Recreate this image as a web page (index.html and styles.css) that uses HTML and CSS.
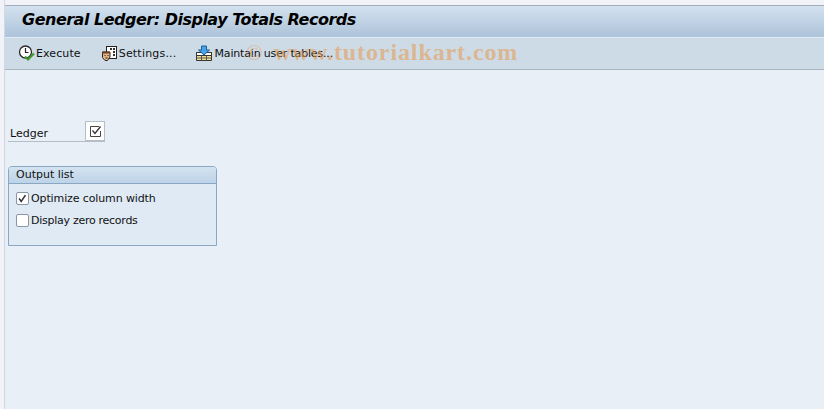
FILE: index.html
```html
<!DOCTYPE html>
<html lang="en">
<head>
<meta charset="utf-8">
<title>General Ledger: Display Totals Records</title>
<link rel="stylesheet" href="styles.css">
</head>
<body>
<div class="window">
  <header class="titlebar"><h1 class="title">General Ledger: Display Totals Records</h1></header>
  <nav class="toolbar">
    <span class="tool tool-execute">
      <svg class="icon" width="18" height="17" viewBox="0 0 18 17">
        <circle cx="7.500" cy="7" r="6" fill="#fff" stroke="#2b2b2b" stroke-width="1.300"/>
        <path d="M7.500 3v4.500h3" fill="none" stroke="#222" stroke-width="1.200"/>
        <path d="M7 11.500l3 3 6-6" fill="none" stroke="#3f9a2c" stroke-width="2.200"/>
      </svg>Execute
    </span>
    <span class="tool tool-settings">
      <svg class="icon" width="17" height="17" viewBox="0 0 17 17">
        <rect x="5.500" y="1.500" width="10" height="12" fill="#fff" stroke="#222"/>
        <path d="M9 3h2v2H9zM12 3h2v2h-2zM12 6h2v2h-2zM12 9h2v2h-2z" fill="#333"/>
        <path d="M1.500 7h7.500v5l-2.500 3.500h-2.500l-2.500-3z" fill="#e2b48a" stroke="#3a2414"/>
        <path d="M1.500 6.500h7.500v2h-7.500z" fill="#6e4322"/>
        <path d="M3.500 10.500h1M6.500 10.500h1M4.500 13h2" stroke="#222"/>
      </svg>Settings...
    </span>
    <span class="tool tool-maintain">
      <svg class="icon" width="18" height="17" viewBox="0 0 18 17">
        <path d="M1.500 7.500h15v8h-15z" fill="#f6df92" stroke="#333"/>
        <path d="M1.500 7.500h15v3h-15z" fill="#fff" stroke="#333"/>
        <path d="M6.500 10.500v5M11.500 10.500v5M1.500 13h15" stroke="#555"/>
        <path d="M6.500 1h5v4h3l-5.500 5-5.500-5h3z" fill="#4aa3e8" stroke="#1d5f9a"/>
      </svg>Maintain user tables...
    </span>
  </nav>
  <main class="content">
    <div class="field-row">
      <span class="field-label">Ledger</span>
      <span class="check-cell">
        <svg width="13" height="13" viewBox="0 0 13 13">
          <path d="M10 1.500H1.500v10h10V6" fill="none" stroke="#444"/>
          <path d="M3.500 5.500l2.500 3 5.500-7" fill="none" stroke="#333" stroke-width="1.300"/>
        </svg>
      </span>
    </div>
    <section class="group">
      <h2 class="group-title">Output list</h2>
      <div class="group-body">
        <label class="option">
          <span class="box"><svg width="13" height="13" viewBox="0 0 13 13"><path d="M2.500 6.500l2.500 3.500 5-7.500" fill="none" stroke="#333" stroke-width="1.800"/></svg></span>Optimize column width
        </label>
        <label class="option option-last"><span class="box"></span>Display zero records</label>
      </div>
    </section>
  </main>
  <div class="watermark"><span class="copy">©</span>www.tutorialkart.com</div>
</div>
</body>
</html>
```

FILE: styles.css
```css
* { box-sizing: border-box; }
html, body { margin: 0; height: 100%; }
body {
  background: #f1f3f8;
  font-family: "DejaVu Sans", sans-serif;
  overflow: hidden;
}
.window {
  position: relative;
  height: 409px;
  margin-left: 4px;
  padding-top: 5px;
  border-left: 1px solid #d3d7e3;
  background: linear-gradient(#f1f3f8 5px, #e8eff7 5px);
}
.titlebar {
  height: 32px;
  padding: 4px 0 0 17px;
  border-top: 1px solid #a4adbd;
  background: linear-gradient(#d3e1ee, #adc3da);
}
.title {
  margin: 0;
  font: italic bold 16px/20px "DejaVu Sans", sans-serif;
  letter-spacing: -0.5px;
  color: #000;
}
.toolbar {
  display: flex;
  align-items: center;
  height: 33px;
  padding-left: 13px;
  border-top: 1px solid #e4edf5;
  border-bottom: 1px solid #a9b5c3;
  background: #cddbe7;
}
.tool {
  display: flex;
  align-items: center;
  font-size: 11px;
  color: #111;
  white-space: nowrap;
}
.tool-execute { letter-spacing: 0.1px; }
.tool-settings { margin-left: 20px; gap: 1px; letter-spacing: 0.2px; }
.tool-maintain { margin-left: 18px; gap: 2px; letter-spacing: -0.17px; }
.content { padding: 52px 0 0 3px; }
.field-row {
  display: flex;
  align-items: flex-end;
  width: 97px;
  height: 20px;
  border-bottom: 1px solid #b5bdc8;
  font-size: 11px;
  color: #111;
}
.field-label { width: 77px; padding: 0 0 0 2px; line-height: 15px; }
.check-cell {
  display: flex;
  align-items: center;
  justify-content: center;
  width: 20px;
  height: 20px;
  background: #fff;
  border: 1px solid #b5bdc8;
}
.group {
  width: 209px;
  height: 80px;
  margin-top: 24px;
  border: 1px solid #8aa7c4;
  border-radius: 4px 4px 0 0;
  background: #dfeaf4;
}
.group-title {
  margin: 0;
  height: 17px;
  padding-left: 7px;
  border-bottom: 1px solid #8aa7c4;
  background: linear-gradient(#d4e3f0, #bdd3e7);
  font: 400 11px/16px "DejaVu Sans", sans-serif;
  color: #111;
  border-radius: 3px 3px 0 0;
}
.group-body { padding: 3px 0 0 7px; }
.option {
  display: flex;
  align-items: center;
  height: 22px;
  font-size: 11px;
  letter-spacing: -0.12px;
  color: #111;
}
.option-last { letter-spacing: -0.27px; }
.box {
  display: flex;
  align-items: center;
  justify-content: center;
  width: 13px;
  height: 13px;
  margin-right: 2px;
  border: 1px solid #8b97a6;
  border-radius: 2px;
  background: #fff;
}
.icon { flex: none; }
.watermark {
  position: absolute;
  left: 241px;
  top: 37px;
  font: bold 24px/30px "Liberation Serif", serif;
  letter-spacing: 0.9px;
  color: rgba(232, 150, 70, 0.55);
  white-space: nowrap;
}
.copy { font-weight: 400; font-size: 22px; margin-right: 10px; }
```
